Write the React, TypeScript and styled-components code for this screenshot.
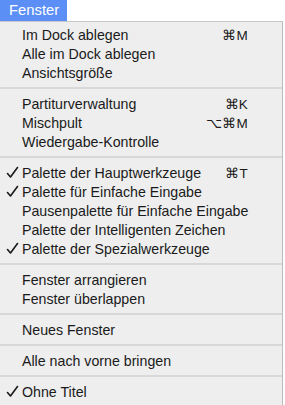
import React from "react";
import styled, { createGlobalStyle } from "styled-components";

const Global = createGlobalStyle`
  html, body { margin: 0; padding: 0; background: #ffffff; }
  body { font-family: "Liberation Sans", Arial, sans-serif; }
`;

const Page = styled.div`
  width: 285px;
  height: 405px;
  overflow: hidden;
  display: flex;
  flex-direction: column;
`;

const MenuBar = styled.div`
  height: 21px;
  display: flex;
  background: #ffffff;
`;

const MenuTitle = styled.div`
  width: 67px;
  background: #5b8ff6;
  color: #ffffff;
  font-size: 14.8px;
  line-height: 21px;
  padding-left: 9px;
  box-sizing: border-box;
`;

const Menu = styled.div`
  width: 283px;
  flex: 1;
  background: #eeeeee;
  border-top: 1px solid #c8c8c8;
  border-right: 1px solid #bdbdbd;
  padding-top: 3px;
  box-sizing: border-box;
`;

const Row = styled.div`
  height: 19px;
  display: flex;
  align-items: center;
  font-size: 14.2px;
  color: #1a1a1a;
  position: relative;
  padding-left: 22px;
  padding-right: 34px;
`;

const Check = styled.svg`
  position: absolute;
  left: 6px;
  top: 3px;
  width: 13px;
  height: 13px;
`;

const Label = styled.span`
  flex: 1;
  white-space: nowrap;
`;

const Shortcut = styled.span`
  white-space: nowrap;
  font-size: 13.5px;
  letter-spacing: 0.2px;
`;

const Separator = styled.div`
  height: 2px;
  margin: 5px 0 5px;
  background: #d8d8d8;
`;

type Item = { label: string; check?: boolean; shortcut?: string } | "sep";

const items: Item[] = [
  { label: "Im Dock ablegen", shortcut: "⌘M" },
  { label: "Alle im Dock ablegen" },
  { label: "Ansichtsgröße" },
  "sep",
  { label: "Partiturverwaltung", shortcut: "⌘K" },
  { label: "Mischpult", shortcut: "⌥⌘M" },
  { label: "Wiedergabe-Kontrolle" },
  "sep",
  { label: "Palette der Hauptwerkzeuge", check: true, shortcut: "⌘T" },
  { label: "Palette für Einfache Eingabe", check: true },
  { label: "Pausenpalette für Einfache Eingabe" },
  { label: "Palette der Intelligenten Zeichen" },
  { label: "Palette der Spezialwerkzeuge", check: true },
  "sep",
  { label: "Fenster arrangieren" },
  { label: "Fenster überlappen" },
  "sep",
  { label: "Neues Fenster" },
  "sep",
  { label: "Alle nach vorne bringen" },
  "sep",
  { label: "Ohne Titel", check: true },
];

export default function App() {
  return (
    <Page>
      <Global />
      <MenuBar>
        <MenuTitle>Fenster</MenuTitle>
      </MenuBar>
      <Menu>
        {items.map((it, i) =>
          it === "sep" ? (
            <Separator key={i} />
          ) : (
            <Row key={i}>
              {it.check && (
                <Check viewBox="0 0 13 13">
                  <polyline
                    points="1.5,7.5 4.5,11 11.5,1.5"
                    fill="none"
                    stroke="#1a1a1a"
                    strokeWidth="1.6"
                    strokeLinecap="round"
                    strokeLinejoin="round"
                  />
                </Check>
              )}
              <Label>{it.label}</Label>
              {it.shortcut && <Shortcut>{it.shortcut}</Shortcut>}
            </Row>
          )
        )}
      </Menu>
    </Page>
  );
}
